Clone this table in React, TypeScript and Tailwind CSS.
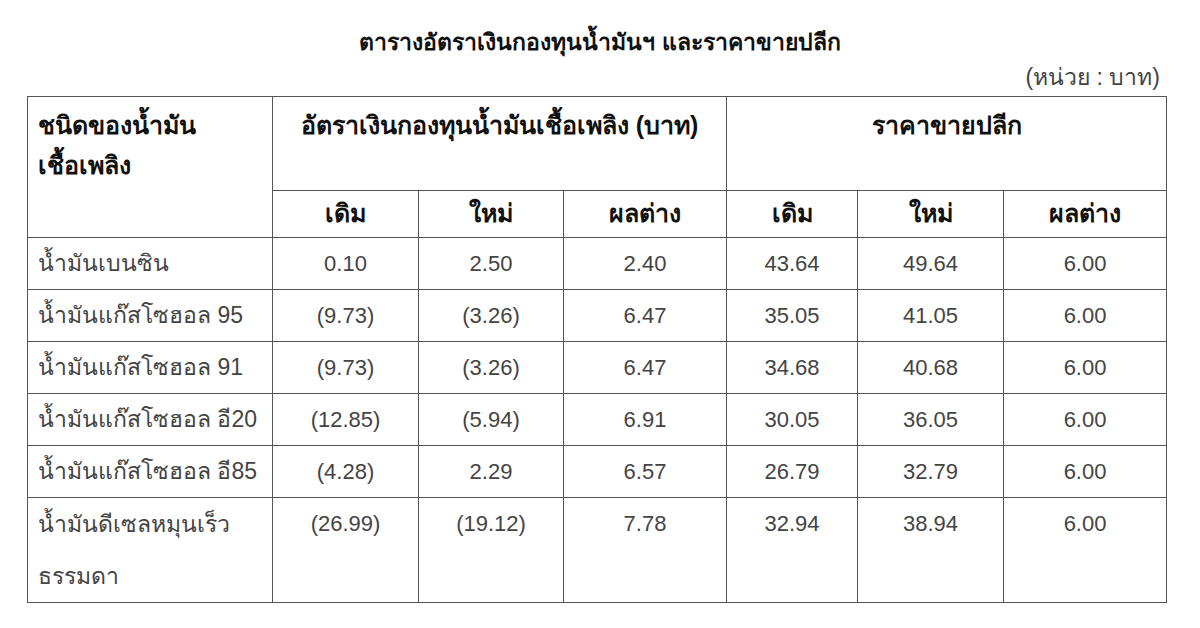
const rows = [
  { name: 'น้ำมันเบนซิน', a: '0.10', b: '2.50', c: '2.40', d: '43.64', e: '49.64', f: '6.00' },
  { name: 'น้ำมันแก๊สโซฮอล 95', a: '(9.73)', b: '(3.26)', c: '6.47', d: '35.05', e: '41.05', f: '6.00' },
  { name: 'น้ำมันแก๊สโซฮอล 91', a: '(9.73)', b: '(3.26)', c: '6.47', d: '34.68', e: '40.68', f: '6.00' },
  { name: 'น้ำมันแก๊สโซฮอล อี20', a: '(12.85)', b: '(5.94)', c: '6.91', d: '30.05', e: '36.05', f: '6.00' },
  { name: 'น้ำมันแก๊สโซฮอล อี85', a: '(4.28)', b: '2.29', c: '6.57', d: '26.79', e: '32.79', f: '6.00' },
];

export default function App() {
  const cell = 'border border-[#555] text-center align-middle';
  const sub = 'border border-[#555] text-center align-middle font-bold';
  const last = 'border border-[#555] text-center align-top leading-[52px]';
  return (
    <div className="w-[1200px] h-[628px] bg-white text-[#444] font-['Liberation_Sans',sans-serif] overflow-hidden">
      <h1 className="pt-[27px] text-center text-[23px] leading-[30px] font-bold text-[#111]">
        ตารางอัตราเงินกองทุนน้ำมันฯ และราคาขายปลีก
      </h1>
      <div className="pr-[40px] pt-[7px] text-right text-[23px] leading-[26px]">(หน่วย : บาท)</div>
      <div className="px-[27px] pt-[6px]">
        <table className="w-[1139px] border-collapse table-fixed text-[22px]">
          <colgroup>
            <col className="w-[245px]" />
            <col className="w-[146px]" />
            <col className="w-[145px]" />
            <col className="w-[163px]" />
            <col className="w-[131px]" />
            <col className="w-[146px]" />
            <col className="w-[163px]" />
          </colgroup>
          <thead className="text-[#111] text-[25px]">
            <tr className="h-[94px]">
              <th rowSpan={2} className="border border-[#555] align-top text-left pl-[10px] pt-[8px] leading-[40px] font-bold">
                ชนิดของน้ำมัน
                <br />
                เชื้อเพลิง
              </th>
              <th colSpan={3} className="border border-[#555] align-top pt-[8px] leading-[40px] font-bold">
                อัตราเงินกองทุนน้ำมันเชื้อเพลิง (บาท)
              </th>
              <th colSpan={3} className="border border-[#555] align-top pt-[8px] leading-[40px] font-bold">
                ราคาขายปลีก
              </th>
            </tr>
            <tr className="h-[47px]">
              <th className={sub}>เดิม</th>
              <th className={sub}>ใหม่</th>
              <th className={sub}>ผลต่าง</th>
              <th className={sub}>เดิม</th>
              <th className={sub}>ใหม่</th>
              <th className={sub}>ผลต่าง</th>
            </tr>
          </thead>
          <tbody>
            {rows.map((r) => (
              <tr key={r.name} className="h-[52px]">
                <td className="border border-[#555] pl-[10px] align-middle whitespace-nowrap text-[23px]">{r.name}</td>
                <td className={cell}>{r.a}</td>
                <td className={cell}>{r.b}</td>
                <td className={cell}>{r.c}</td>
                <td className={cell}>{r.d}</td>
                <td className={cell}>{r.e}</td>
                <td className={cell}>{r.f}</td>
              </tr>
            ))}
            <tr className="h-[103px]">
              <td className="border border-[#555] pl-[10px] align-top leading-[52px] text-[23px]">
                น้ำมันดีเซลหมุนเร็ว
                <br />
                ธรรมดา
              </td>
              <td className={last}>(26.99)</td>
              <td className={last}>(19.12)</td>
              <td className={last}>7.78</td>
              <td className={last}>32.94</td>
              <td className={last}>38.94</td>
              <td className={last}>6.00</td>
            </tr>
          </tbody>
        </table>
      </div>
    </div>
  );
}
